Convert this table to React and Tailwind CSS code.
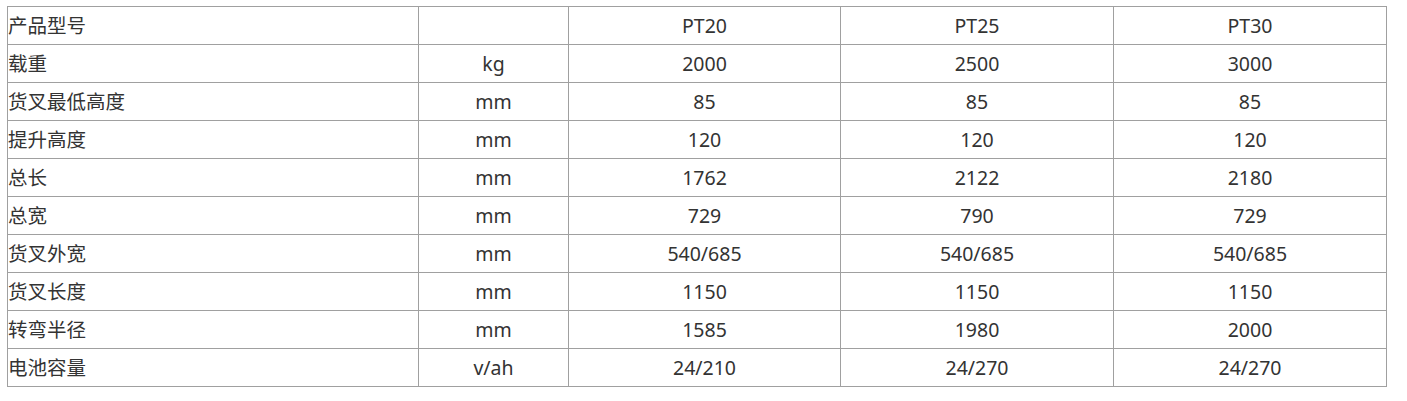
import React from "react";

const ROWS = [
  ["产品型号", "", "PT20", "PT25", "PT30"],
  ["载重", "kg", "2000", "2500", "3000"],
  ["货叉最低高度", "mm", "85", "85", "85"],
  ["提升高度", "mm", "120", "120", "120"],
  ["总长", "mm", "1762", "2122", "2180"],
  ["总宽", "mm", "729", "790", "729"],
  ["货叉外宽", "mm", "540/685", "540/685", "540/685"],
  ["货叉长度", "mm", "1150", "1150", "1150"],
  ["转弯半径", "mm", "1585", "1980", "2000"],
  ["电池容量", "v/ah", "24/210", "24/270", "24/270"],
];

export default function App() {
  return (
    <div className="bg-white w-[1407px] h-[401px] pt-[6px] pl-[7px]" style={{ fontFamily: '"Noto Sans", "Noto Sans CJK SC", sans-serif' }}>
      <table className="table-fixed border-collapse w-[1380px] text-[19.5px] text-[#333]">
        <colgroup>
          <col className="w-[411px]" />
          <col className="w-[150px]" />
          <col className="w-[272px]" />
          <col className="w-[273px]" />
          <col className="w-[273px]" />
        </colgroup>
        <tbody>
          {ROWS.map((row, i) => (
            <tr key={i} className="h-[38px]">
              {row.map((cell, j) => (
                <td
                  key={j}
                  className={`border border-[#a0a0a0] p-0 leading-[37px] ${j === 0 ? "text-left" : "text-center"}`}
                >
                  {cell}
                </td>
              ))}
            </tr>
          ))}
        </tbody>
      </table>
    </div>
  );
}
